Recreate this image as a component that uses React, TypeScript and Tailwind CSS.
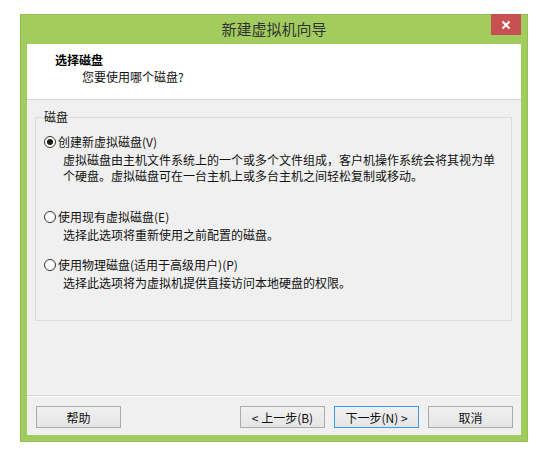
import React from "react";

const FONT = { fontFamily: '"Noto Sans CJK SC", "Microsoft YaHei", sans-serif' };

type Option = {
  label: string;
  key: string;
  lines: string[];
  checked?: boolean;
};

const OPTIONS: Option[] = [
  {
    label: "创建新虚拟磁盘",
    key: "V",
    checked: true,
    lines: [
      "虚拟磁盘由主机文件系统上的一个或多个文件组成，客户机操作系统会将其视为单",
      "个硬盘。虚拟磁盘可在一台主机上或多台主机之间轻松复制或移动。",
    ],
  },
  {
    label: "使用现有虚拟磁盘",
    key: "E",
    lines: ["选择此选项将重新使用之前配置的磁盘。"],
  },
  {
    label: "使用物理磁盘(适用于高级用户)",
    key: "P",
    lines: ["选择此选项将为虚拟机提供直接访问本地硬盘的权限。"],
  },
];

function Radio({ checked }: { checked?: boolean }) {
  return (
    <span className="flex h-[12px] w-[12px] shrink-0 items-center justify-center rounded-full border border-[#333] bg-white">
      {checked && <span className="h-[6px] w-[6px] rounded-full bg-[#1a1a1a]" />}
    </span>
  );
}

function OptionRow({ option, className }: { option: Option; className?: string }) {
  return (
    <div className={className}>
      <div className="flex items-center gap-[2px] text-[12px] leading-[16px] text-[#111]">
        <Radio checked={option.checked} />
        <span>
          {option.label}({option.key})
        </span>
      </div>
      <div className="mt-[2px] pl-[19px] text-[12px] leading-[16px] text-[#111]">
        {option.lines.map((l) => (
          <div key={l}>{l}</div>
        ))}
      </div>
    </div>
  );
}

function Button({ children, primary }: { children: React.ReactNode; primary?: boolean }) {
  return (
    <button
      className={`h-[22px] w-[85px] border bg-gradient-to-b from-[#f0f0f0] to-[#e5e5e5] text-[12px] leading-[15px] text-[#111] ${
        primary ? "border-[#3c9be8]" : "border-[#acacac]"
      }`}
    >
      {children}
    </button>
  );
}

export default function App() {
  return (
    <div className="h-[469px] w-[554px] bg-white pl-[20px] pt-[14px]" style={FONT}>
      <div className="flex h-[428px] w-[508px] flex-col border border-[#93c052] bg-[#a2cd5e]">
        {/* title bar */}
        <div className="relative flex h-[29px] items-center justify-center text-[15px] text-[#333]">
          新建虚拟机向导
          <div className="absolute right-[6px] top-[-1px] flex h-[21px] w-[30px] items-center justify-center bg-[#c75050]">
            <svg width="10" height="10" viewBox="0 0 10 10">
              <path d="M1.5 1.5 L8.5 8.5 M8.5 1.5 L1.5 8.5" stroke="#fff" strokeWidth="2" />
            </svg>
          </div>
        </div>

        <div className="mx-[6px] mb-[6px] flex flex-1 flex-col bg-[#f0f0f0]">
          {/* header */}
          <div className="h-[56px] border-b border-[#d5d5d5] bg-white pl-[28px] pt-[8px]">
            <div className="text-[12px] font-bold leading-[16px] text-black">选择磁盘</div>
            <div className="mt-[1px] pl-[27px] text-[12px] leading-[16px] text-[#111]">
              您要使用哪个磁盘?
            </div>
          </div>

          {/* disk choices */}
          <fieldset className="ml-[8px] mr-[9px] mt-[9px] h-[212px] border border-[#dcdcdc] pl-[8px]">
            <legend className="-ml-[1px] px-px text-[12px] leading-[16px] text-[#111]">磁盘</legend>
            <OptionRow option={OPTIONS[0]} className="mt-[9px]" />
            <OptionRow option={OPTIONS[1]} className="mt-[25px]" />
            <OptionRow option={OPTIONS[2]} className="mt-[14px]" />
          </fieldset>

          <div className="flex-1" />

          {/* footer */}
          <div className="h-[40px] border-t border-[#d5d5d5]">
            <div className="flex border-t border-white pl-[9px] pr-[8px] pt-[9px]">
              <Button>帮助</Button>
              <div className="ml-auto flex gap-[9px]">
                <Button>&lt; 上一步(B)</Button>
                <Button primary>下一步(N) &gt;</Button>
                <Button>取消</Button>
              </div>
            </div>
          </div>
        </div>
      </div>
    </div>
  );
}
